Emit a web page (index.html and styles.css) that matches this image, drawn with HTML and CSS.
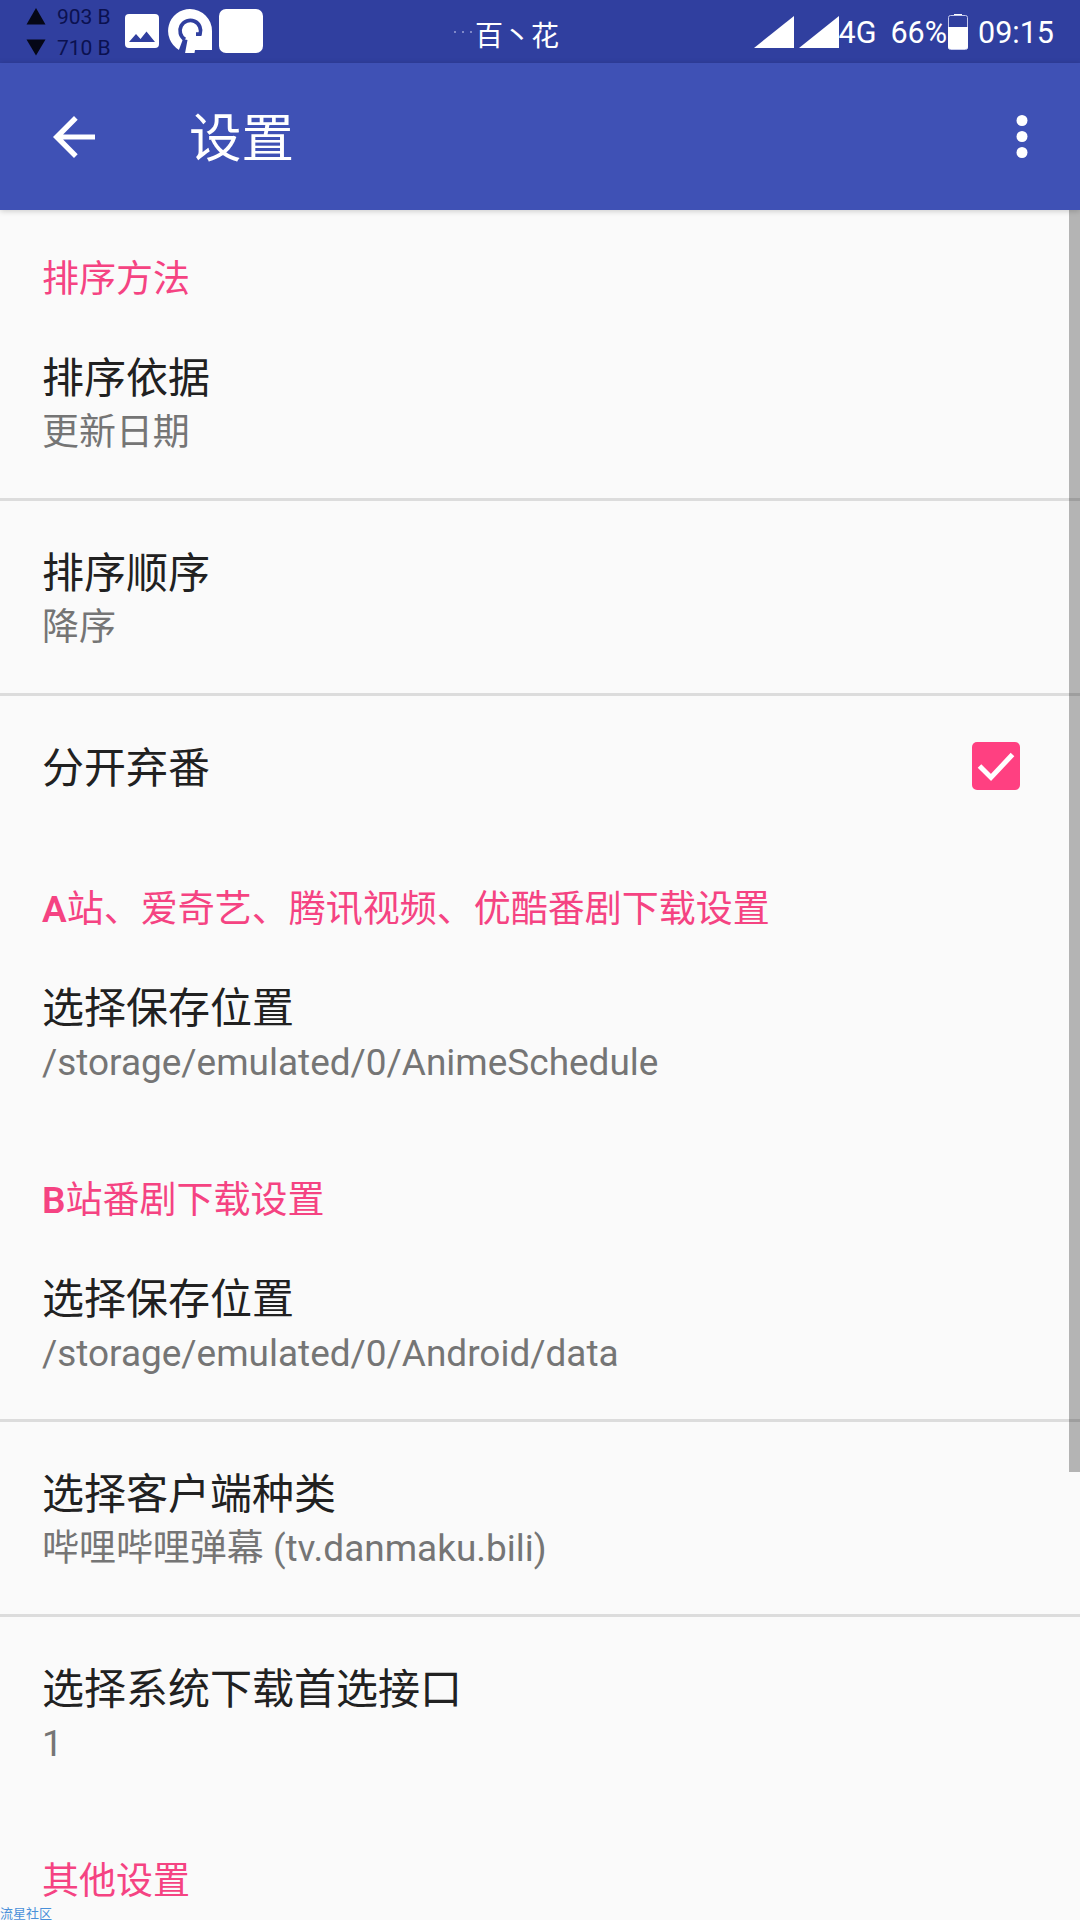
FILE: index.html
```html
<!DOCTYPE html>
<html lang="zh-CN">
<head>
<meta charset="utf-8">
<title>设置</title>
<link rel="stylesheet" href="styles.css">
</head>
<body>
<div class="screen">
  <div class="status-bar">
    <div class="net">
      <div class="net-row"><svg width="20" height="17" viewBox="0 0 20 17"><path d="M10 0 19.500 16.500H.5z"/></svg><span>903 B</span></div>
      <div class="net-row"><svg width="20" height="17" viewBox="0 0 20 17"><path d="M10 16.500 19.500 .5H.5z"/></svg><span>710 B</span></div>
    </div>
    <svg class="icon-image" width="34" height="34" viewBox="0 0 34 34"><rect width="34" height="34" rx="4" fill="#fff"/><path d="M4 28 11 20 15.500 25 21.500 17.500 30 28z" fill="#303f9f"/></svg>
    <svg class="icon-app" width="44" height="45" viewBox="0 0 44 45"><path d="M22 0a22 22 0 0 1 22 22V41H27L26.500 44H17L11 41A22 22 0 0 1 22 0z" fill="#fff"/><path d="M17 30.500A10.300 10.300 0 1 1 32 25.200H28" fill="none" stroke="#303f9f" stroke-width="3.800"/><path d="M15 30 19.500 31 17 44.500 10.500 42z" fill="#303f9f"/></svg>
    <span class="icon-square"></span>
    <div class="ticker"><span class="ticker-dots"><i></i><i></i><i></i></span>百丶花</div>
    <div class="system">
      <svg class="signal" width="40" height="32" viewBox="0 0 40 32"><path d="M40 0V32H0z"/></svg>
      <svg class="signal second" width="40" height="32" viewBox="0 0 40 32"><path d="M40 0V32H0z"/></svg>
      <span>4G</span>
      <span class="percent">66%</span>
      <svg class="battery" width="20" height="36" viewBox="0 0 20 36"><path d="M6 0h8v2h-8z" fill="#fff"/><rect x=".5" y="1.500" width="19" height="34" rx="2" fill="none" stroke="#c5caec"/><path d="M0 13h20v20q0 2-2 2H2q-2 0-2-2z" fill="#fff"/></svg>
      <span class="clock">09:15</span>
    </div>
  </div>
  <header class="app-bar">
    <svg class="back" width="42" height="42" viewBox="0 0 42 42"><path d="M42 18.400H10.100L24.700 3.700 21 0 0 21 21 42 24.700 38.300 10.100 23.600H42z"/></svg>
    <h1>设置</h1>
    <svg class="more" width="12" height="43" viewBox="0 0 12 43"><circle cx="6" cy="5.500" r="5.500"/><circle cx="6" cy="21.500" r="5.500"/><circle cx="6" cy="37.500" r="5.500"/></svg>
  </header>
  <main class="list">
    <section>
      <h2>排序方法</h2>
      <div class="item"><div class="title">排序依据</div><div class="summary">更新日期</div></div>
      <div class="item"><div class="title">排序顺序</div><div class="summary">降序</div></div>
      <div class="item check-item"><div class="title">分开弃番</div>
        <svg width="48" height="48" viewBox="0 0 48 48"><rect width="48" height="48" rx="5" fill="#ff4081"/><path d="M7.500 24 19 35.500 40.500 12.500" fill="none" stroke="#fff" stroke-width="5"/></svg>
      </div>
    </section>
    <section>
      <h2><b>A</b>站、爱奇艺、腾讯视频、优酷番剧下载设置</h2>
      <div class="item"><div class="title">选择保存位置</div><div class="summary">/storage/emulated/0/AnimeSchedule</div></div>
    </section>
    <section>
      <h2><b>B</b>站番剧下载设置</h2>
      <div class="item"><div class="title">选择保存位置</div><div class="summary">/storage/emulated/0/Android/data</div></div>
      <div class="item"><div class="title">选择客户端种类</div><div class="summary">哔哩哔哩弹幕 (tv.danmaku.bili)</div></div>
      <div class="item"><div class="title">选择系统下载首选接口</div><div class="summary">1</div></div>
    </section>
    <section>
      <h2>其他设置</h2>
    </section>
  </main>
  <div class="scrollbar"></div>
  <div class="watermark">流星社区</div>
</div>
</body>
</html>
```
FILE: styles.css
```css
* { box-sizing: border-box; }

body {
  margin: 0;
  font-family: Roboto, "Noto Sans CJK SC", sans-serif;
}

svg { display: block; flex: none; }

.screen {
  position: relative;
  width: 1080px;
  height: 1920px;
  overflow: hidden;
  background: #fafafa;
}

.status-bar {
  display: flex;
  height: 63px;
  padding-left: 26px;
  background: #303f9f;
  color: #fff;
}

.net { width: 99px; padding-top: 1px; color: #0b1150; font-size: 21px; }
.net-row { display: flex; align-items: center; gap: 11px; height: 31px; line-height: 33px; white-space: nowrap; }
.net-row span { padding-top: 2px; }
.net-row svg { fill: #050716; }

.icon-image { margin-top: 14px; }
.icon-app { margin: 9px 0 0 9px; }
.icon-square { width: 44px; height: 44px; margin: 9px 0 0 7px; border-radius: 7px; background: #fff; }

.ticker { display: flex; margin-left: 191px; font-size: 28px; line-height: 73px; }
.ticker-dots { display: flex; gap: 6px; width: 21px; padding-top: 31px; }
.ticker-dots i { width: 2px; height: 2px; background: #7f88c8; }

.system { display: flex; margin-left: auto; padding-right: 26px; font-size: 30.5px; line-height: 65px; }
.signal { margin-top: 16px; fill: #fff; }
.second { margin-left: 5px; }
.percent { margin-left: 14px; }
.battery { margin: 14px 0 0 1px; }
.clock { margin-left: 10px; }

.app-bar {
  position: relative;
  display: flex;
  align-items: center;
  height: 147px;
  padding: 0 52px 0 53px;
  background: #3f51b5;
  color: #fff;
  fill: #fff;
  box-shadow: 0 1px 6px rgba(0, 0, 0, .2);
}
.app-bar h1 { margin: 0 0 0 94px; padding-top: 5px; font-size: 52.5px; font-weight: 400; line-height: 142px; }
.more { margin-left: auto; }

h2 {
  height: 96px;
  margin: 0;
  padding: 46px 42px 0;
  color: #f54382;
  font-size: 37px;
  font-weight: 400;
  line-height: 47px;
  white-space: nowrap;
}
h2 b { font-weight: 600; }

.item { height: 195px; padding: 48px 42px 0; border-bottom: 3px solid #dcdcdc; }
.item:last-child { border-color: transparent; }
.title { color: #212121; font-size: 42px; line-height: 50px; }
.summary { color: #757575; font-size: 36.96px; line-height: 57px; white-space: nowrap; }

.check-item { display: flex; justify-content: space-between; height: 144px; padding: 46px 60px 0 42px; }
.check-item .title { line-height: 53px; }

.scrollbar { position: absolute; top: 210px; right: 0; width: 11px; height: 1262px; background: rgba(0, 0, 0, .28); }

.watermark { position: absolute; left: 0; bottom: -4px; color: #4a90d9; font-size: 13px; line-height: 20px; }
```
